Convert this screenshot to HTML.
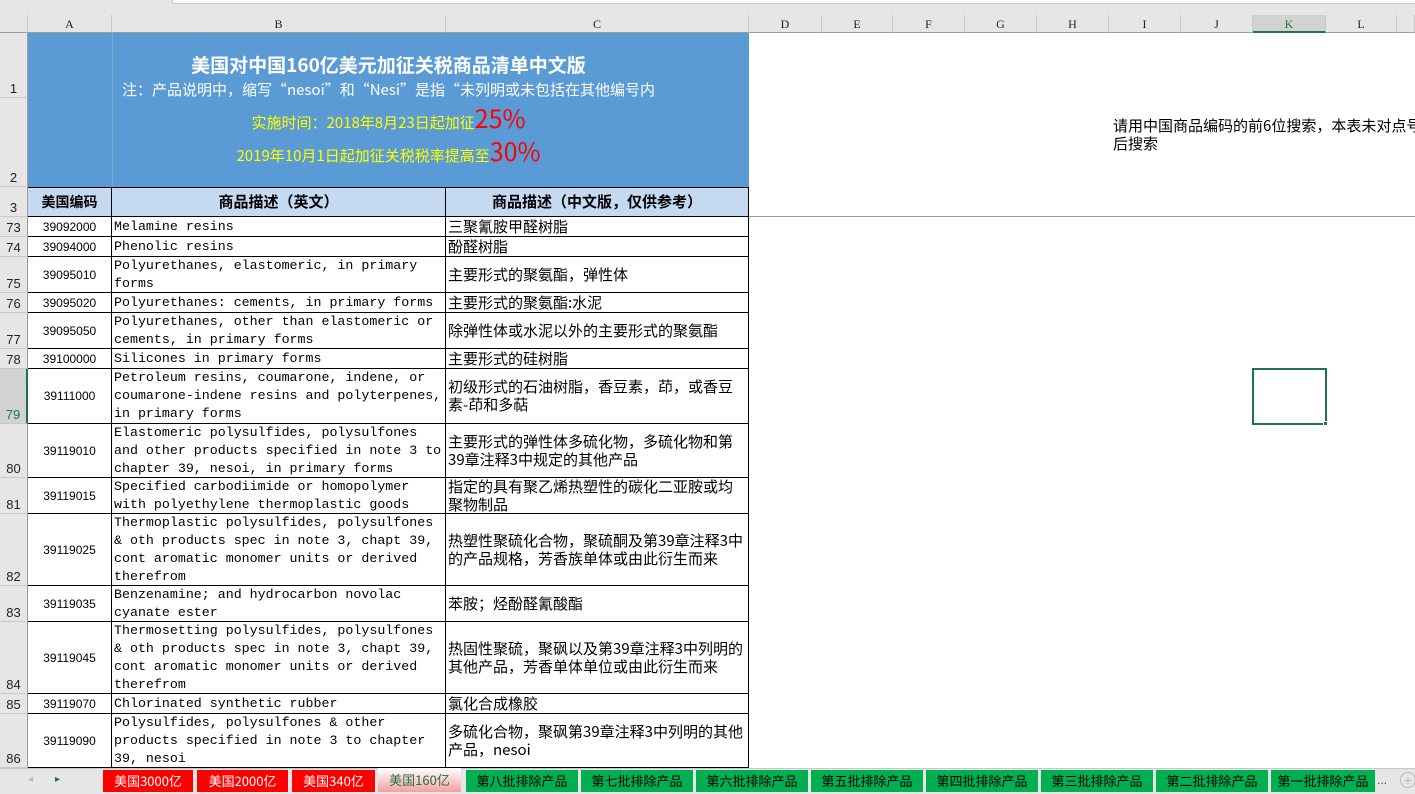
<!DOCTYPE html>
<html><head><meta charset="utf-8"><style>
*{margin:0;padding:0;box-sizing:border-box}
body{width:1415px;height:794px;overflow:hidden;background:#fff;position:relative;font-family:"Liberation Sans","Noto Sans CJK SC",sans-serif}
.a{position:absolute}
.ch{position:absolute;top:15px;height:18px;background:#e6e6e6;border-right:1px solid #c8c8c8;border-bottom:1px solid #9b9b9b;font:12px "Liberation Serif","Noto Serif CJK SC",serif;text-align:center;line-height:18px;color:#222}
.rh{position:absolute;left:0;width:28px;background:#e6e6e6;border-bottom:1px solid #c8c8c8;border-right:1px solid #9b9b9b;font-size:13px;color:#222;text-align:center;display:flex;align-items:flex-end;justify-content:center;padding-bottom:1px}
.c{position:absolute;border-right:1px solid #000;border-bottom:1px solid #000;overflow:hidden}
.code{font-size:12px;display:flex;align-items:center;justify-content:center;color:#000}
.en{font:13.3px/18px "Liberation Mono",monospace;padding-left:2px;color:#000;display:flex;align-items:center;white-space:pre}
.zh{font:15px/18px "Noto Sans CJK SC",sans-serif;padding-left:2px;display:flex;align-items:center;color:#000;white-space:nowrap}
.tab{position:absolute;top:770px;height:22px;font:13px/22px "Noto Sans CJK SC",sans-serif;text-align:center}
.red{background:#f00;color:#fff}
.grn{background:#00b050;color:#000}
.ttl{position:absolute;left:28px;width:721px;text-align:center;white-space:nowrap;font-family:"Noto Sans CJK SC",sans-serif}
</style></head><body>
<div class="a" style="left:0;top:0;width:1415px;height:15px;background:#e6e6e6"></div>
<div class="a" style="left:172px;top:0;width:1243px;height:4px;background:#fff;border-bottom:1px solid #c8c8c8;border-left:1px solid #c8c8c8"></div>
<div class="ch" style="left:0;width:28px"></div>
<div class="ch" style="left:28px;width:84px">A</div>
<div class="ch" style="left:112px;width:334px">B</div>
<div class="ch" style="left:446px;width:303px">C</div>
<div class="ch" style="left:749px;width:73px">D</div>
<div class="ch" style="left:822px;width:71px">E</div>
<div class="ch" style="left:893px;width:72px">F</div>
<div class="ch" style="left:965px;width:72px">G</div>
<div class="ch" style="left:1037px;width:72px">H</div>
<div class="ch" style="left:1109px;width:72px">I</div>
<div class="ch" style="left:1181px;width:72px">J</div>
<div class="ch" style="left:1253px;width:73px;background:#d2d2d2;color:#217346;border-bottom:2px solid #217346">K</div>
<div class="ch" style="left:1326px;width:71px">L</div>
<div class="ch" style="left:1397px;width:18px"></div>

<div class="rh" style="top:33px;height:65px">1</div>
<div class="rh" style="top:98px;height:89px">2</div>
<div class="rh" style="top:187px;height:30px">3</div>
<div class="rh" style="top:217px;height:20px">73</div>
<div class="rh" style="top:237px;height:20px">74</div>
<div class="rh" style="top:257px;height:36px">75</div>
<div class="rh" style="top:293px;height:20px">76</div>
<div class="rh" style="top:313px;height:36px">77</div>
<div class="rh" style="top:349px;height:20px">78</div>
<div class="rh" style="top:369px;height:55px;background:#d2d2d2;color:#217346;border-right:2px solid #217346">79</div>
<div class="rh" style="top:424px;height:54px">80</div>
<div class="rh" style="top:478px;height:36px">81</div>
<div class="rh" style="top:514px;height:72px">82</div>
<div class="rh" style="top:586px;height:36px">83</div>
<div class="rh" style="top:622px;height:72px">84</div>
<div class="rh" style="top:694px;height:20px">85</div>
<div class="rh" style="top:714px;height:54px">86</div>

<div class="a" style="left:28px;top:33px;width:721px;height:154px;background:#5b9bd5"></div>
<div class="a" style="left:112px;top:33px;width:1px;height:154px;background:#7fa6cc"></div>
<div class="ttl" style="top:52px;color:#fff;font-weight:bold;font-size:19px;line-height:26px">美国对中国160亿美元加征关税商品清单中文版</div>
<div class="ttl" style="top:80px;color:#fff;font-size:15px;line-height:20px">注：产品说明中，缩写“nesoi”和“Nesi”是指“未列明或未包括在其他编号内</div>
<div class="ttl" style="top:103px;color:#ff0;font-size:15px;line-height:30px">实施时间：2018年8月23日起加征<span style="color:#f00;font-size:25px">25%</span></div>
<div class="ttl" style="top:136px;color:#ff0;font-size:15px;line-height:30px">2019年10月1日起加征关税税率提高至<span style="color:#f00;font-size:25px">30%</span></div>

<div class="a" style="left:28px;top:187px;width:721px;height:30px;background:#c5d9f1;border-top:1px solid #000"></div>
<div class="c" style="left:28px;top:187px;width:84px;height:30px;font-weight:bold;font-size:14px;text-align:center;line-height:30px;font-family:'Noto Sans CJK SC',sans-serif">美国编码</div>
<div class="c" style="left:112px;top:187px;width:334px;height:30px;font-weight:bold;font-size:15px;text-align:center;line-height:30px;font-family:'Noto Sans CJK SC',sans-serif">商品描述（英文）</div>
<div class="c" style="left:446px;top:187px;width:303px;height:30px;font-weight:bold;font-size:15px;text-align:center;line-height:30px;font-family:'Noto Sans CJK SC',sans-serif">商品描述（中文版，仅供参考）</div>
<div class="a" style="left:749px;top:216px;width:666px;height:1px;background:#999"></div>

<div class="a" style="left:1113px;top:117px;font-size:15px;line-height:18px;white-space:nowrap;font-family:'Noto Sans CJK SC',sans-serif">请用中国商品编码的前6位搜索，本表未对点号<br>后搜索</div>
<div class="a" style="left:1252px;top:368px;width:75px;height:57px;border:2px solid #217346"></div>
<div class="a" style="left:1323px;top:421px;width:5px;height:5px;background:#217346;border:1px solid #fff"></div>

<div class="c code" style="left:28px;top:217px;width:84px;height:20px">39092000</div>
<div class="c en" style="left:112px;top:217px;width:334px;height:20px">Melamine resins</div>
<div class="c zh" style="left:446px;top:217px;width:303px;height:20px">三聚氰胺甲醛树脂</div>

<div class="c code" style="left:28px;top:237px;width:84px;height:20px">39094000</div>
<div class="c en" style="left:112px;top:237px;width:334px;height:20px">Phenolic resins</div>
<div class="c zh" style="left:446px;top:237px;width:303px;height:20px">酚醛树脂</div>

<div class="c code" style="left:28px;top:257px;width:84px;height:36px">39095010</div>
<div class="c en" style="left:112px;top:257px;width:334px;height:36px">Polyurethanes, elastomeric, in primary
forms</div>
<div class="c zh" style="left:446px;top:257px;width:303px;height:36px">主要形式的聚氨酯，弹性体</div>

<div class="c code" style="left:28px;top:293px;width:84px;height:20px">39095020</div>
<div class="c en" style="left:112px;top:293px;width:334px;height:20px">Polyurethanes: cements, in primary forms</div>
<div class="c zh" style="left:446px;top:293px;width:303px;height:20px">主要形式的聚氨酯:水泥</div>

<div class="c code" style="left:28px;top:313px;width:84px;height:36px">39095050</div>
<div class="c en" style="left:112px;top:313px;width:334px;height:36px">Polyurethanes, other than elastomeric or
cements, in primary forms</div>
<div class="c zh" style="left:446px;top:313px;width:303px;height:36px">除弹性体或水泥以外的主要形式的聚氨酯</div>

<div class="c code" style="left:28px;top:349px;width:84px;height:20px">39100000</div>
<div class="c en" style="left:112px;top:349px;width:334px;height:20px">Silicones in primary forms</div>
<div class="c zh" style="left:446px;top:349px;width:303px;height:20px">主要形式的硅树脂</div>

<div class="c code" style="left:28px;top:369px;width:84px;height:55px">39111000</div>
<div class="c en" style="left:112px;top:369px;width:334px;height:55px">Petroleum resins, coumarone, indene, or
coumarone-indene resins and polyterpenes,
in primary forms</div>
<div class="c zh" style="left:446px;top:369px;width:303px;height:55px">初级形式的石油树脂，香豆素，茚，或香豆<br>素-茚和多萜</div>

<div class="c code" style="left:28px;top:424px;width:84px;height:54px">39119010</div>
<div class="c en" style="left:112px;top:424px;width:334px;height:54px">Elastomeric polysulfides, polysulfones
and other products specified in note 3 to
chapter 39, nesoi, in primary forms</div>
<div class="c zh" style="left:446px;top:424px;width:303px;height:54px">主要形式的弹性体多硫化物，多硫化物和第<br>39章注释3中规定的其他产品</div>

<div class="c code" style="left:28px;top:478px;width:84px;height:36px">39119015</div>
<div class="c en" style="left:112px;top:478px;width:334px;height:36px">Specified carbodiimide or homopolymer
with polyethylene thermoplastic goods</div>
<div class="c zh" style="left:446px;top:478px;width:303px;height:36px">指定的具有聚乙烯热塑性的碳化二亚胺或均<br>聚物制品</div>

<div class="c code" style="left:28px;top:514px;width:84px;height:72px">39119025</div>
<div class="c en" style="left:112px;top:514px;width:334px;height:72px">Thermoplastic polysulfides, polysulfones
&amp; oth products spec in note 3, chapt 39,
cont aromatic monomer units or derived
therefrom</div>
<div class="c zh" style="left:446px;top:514px;width:303px;height:72px">热塑性聚硫化合物，聚硫酮及第39章注释3中<br>的产品规格，芳香族单体或由此衍生而来</div>

<div class="c code" style="left:28px;top:586px;width:84px;height:36px">39119035</div>
<div class="c en" style="left:112px;top:586px;width:334px;height:36px">Benzenamine; and hydrocarbon novolac
cyanate ester</div>
<div class="c zh" style="left:446px;top:586px;width:303px;height:36px">苯胺；烃酚醛氰酸酯</div>

<div class="c code" style="left:28px;top:622px;width:84px;height:72px">39119045</div>
<div class="c en" style="left:112px;top:622px;width:334px;height:72px">Thermosetting polysulfides, polysulfones
&amp; oth products spec in note 3, chapt 39,
cont aromatic monomer units or derived
therefrom</div>
<div class="c zh" style="left:446px;top:622px;width:303px;height:72px">热固性聚硫，聚砜以及第39章注释3中列明的<br>其他产品，芳香单体单位或由此衍生而来</div>

<div class="c code" style="left:28px;top:694px;width:84px;height:20px">39119070</div>
<div class="c en" style="left:112px;top:694px;width:334px;height:20px">Chlorinated synthetic rubber</div>
<div class="c zh" style="left:446px;top:694px;width:303px;height:20px">氯化合成橡胶</div>

<div class="c code" style="left:28px;top:714px;width:84px;height:54px">39119090</div>
<div class="c en" style="left:112px;top:714px;width:334px;height:54px">Polysulfides, polysulfones &amp; other
products specified in note 3 to chapter
39, nesoi</div>
<div class="c zh" style="left:446px;top:714px;width:303px;height:54px">多硫化合物，聚砜第39章注释3中列明的其他<br>产品，nesoi</div>

<div class="a" style="left:0;top:768px;width:1415px;height:26px;background:#e6e6e6;border-top:1px solid #c8c8c8"></div>
<div class="a" style="left:28px;top:774px;font-size:10px;color:#bbb">◂</div>
<div class="a" style="left:55px;top:774px;font-size:10px;color:#217346">▸</div>
<div class="tab red" style="left:103px;width:90px">美国3000亿</div>
<div class="tab red" style="left:197px;width:91px">美国2000亿</div>
<div class="tab red" style="left:292px;width:83px">美国340亿</div>
<div class="tab" style="left:378px;width:83px;background:linear-gradient(#fff,#f4a0a0);color:#217346;top:768px;height:24px;line-height:24px">美国160亿</div>
<div class="tab grn" style="left:466px;width:112px">第八批排除产品</div>
<div class="tab grn" style="left:581px;width:112px">第七批排除产品</div>
<div class="tab grn" style="left:696px;width:112px">第六批排除产品</div>
<div class="tab grn" style="left:811px;width:112px">第五批排除产品</div>
<div class="tab grn" style="left:926px;width:112px">第四批排除产品</div>
<div class="tab grn" style="left:1041px;width:112px">第三批排除产品</div>
<div class="tab grn" style="left:1156px;width:112px">第二批排除产品</div>
<div class="tab grn" style="left:1271px;width:104px">第一批排除产品</div>
<div class="a" style="left:1377px;top:773px;font-size:12px;color:#444">...</div>
<div class="a" style="left:1400px;top:772px;width:16px;height:16px;border-radius:50%;border:1px solid #bbb;color:#bbb;font-size:14px;line-height:14px;text-align:center">+</div>
</body></html>
